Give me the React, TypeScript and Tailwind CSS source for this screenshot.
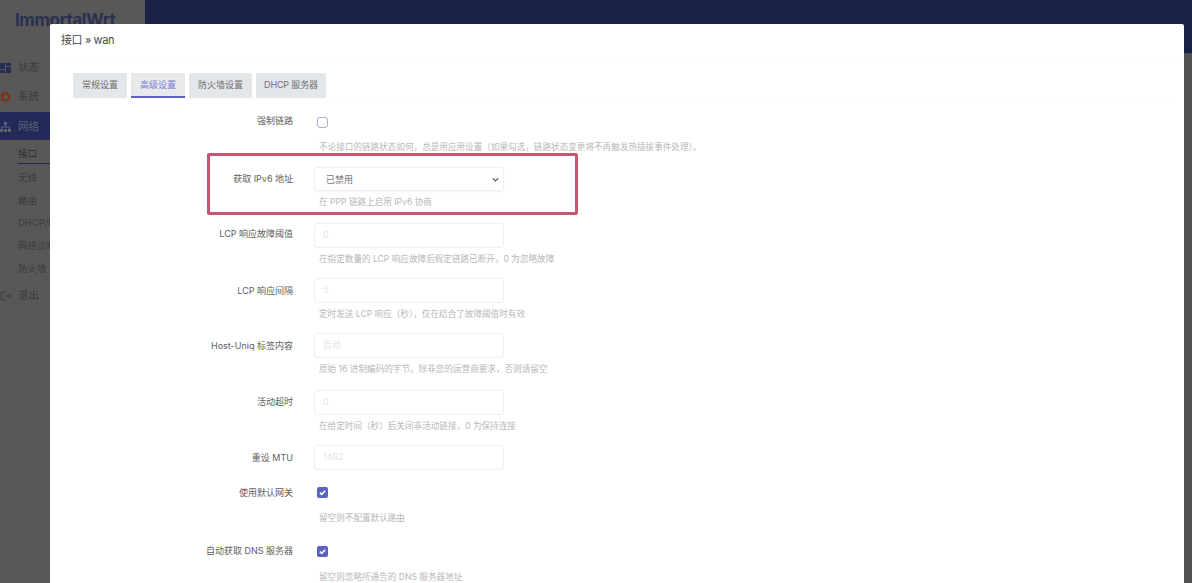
const Row = ({ label, h, top = "pt-[2px]", children }: { label: string; h: string; top?: string; children: React.ReactNode }) => (
  <div className={`flex ${h}`}>
    <div className={`w-[232px] ${top} text-right text-[9px] leading-[18px] text-[#5e5e5e]`}>{label}</div>
    <div className="ml-[21px] flex-1">{children}</div>
  </div>
);

const Input = ({ value }: { value: string }) => (
  <div className="h-[25px] w-[190px] rounded-[3px] border border-[#efefef] bg-white pl-[8px] text-[9px] leading-[22px] text-[#e4e4e4]">
    {value}
  </div>
);

const Hint = ({ children }: { children: React.ReactNode }) => (
  <div className="mt-[2.5px] pl-[5px] text-[8.6px] leading-[16px] whitespace-nowrap text-[#b8b8b8]">{children}</div>
);

const Check = ({ on }: { on?: boolean }) =>
  on ? (
    <div className="ml-[3px] mt-[6px] flex h-[11px] w-[11px] items-center justify-center rounded-[2px] bg-[#5b62c4]">
      <svg viewBox="0 0 12 12" className="h-[9px] w-[9px]" fill="none" stroke="white" strokeWidth="2.2">
        <path d="M2.5 6.3 5 8.6 9.5 3.6" />
      </svg>
    </div>
  ) : (
    <div className="ml-[3px] mt-[5px] h-[11px] w-[11px] rounded-[3px] border border-[#a9add6] bg-white" />
  );

const Tab = ({ active, children }: { active?: boolean; children: React.ReactNode }) =>
  active ? (
    <div className="h-[25px] border-b-2 border-[#5b62c4] bg-[#e7e9eb] px-[9px] leading-[24px] text-[#7a80d2]">{children}</div>
  ) : (
    <div className="h-[25px] rounded-t-[2px] bg-[#e4e7e9] px-[9px] leading-[24px] text-[#6e6e6e]">{children}</div>
  );

const Modal = () => (
  <div className="absolute left-[50px] right-[8px] top-[24px] bottom-0 overflow-hidden rounded-t-[2px] bg-white">
    <div className="h-[35px] border-b border-[#fafafa] pl-[11px] pt-[7px] text-[11px] leading-[18px] tracking-[-0.4px] text-[#4a4a4a]">接口 » wan</div>
    <div className="flex gap-[4px] pl-[23px] pt-[14px] text-[9px]">
      <Tab>常规设置</Tab>
      <Tab active>高级设置</Tab>
      <Tab>防火墙设置</Tab>
      <div className="h-[25px] rounded-t-[2px] bg-[#e4e7e9] px-[8px] leading-[24px] tracking-[-0.15px] text-[#6e6e6e]">DHCP 服务器</div>
    </div>
    <div className="mx-[11px] border-t border-[#fbfbfb] pt-[13px]">
      <Row label="强制链路" h="h-[55px]" top="pt-0">
        <Check />
        <div className="mt-[11px]"><Hint>不论接口的链路状态如何，总是用应用设置（如果勾选，链路状态变更将不再触发热插拔事件处理）。</Hint></div>
      </Row>
      <Row label="获取 IPv6 地址" h="h-[56px]" top="pt-[3px]">
        <div className="flex h-[24px] w-[190px] items-center justify-between rounded-[3px] border border-[#f0f0f0] bg-white pl-[11px] pr-[3px] text-[9px] text-[#777] shadow-[0_1px_2px_rgba(0,0,0,0.04)]">
          <span className="pt-[1px]">已禁用</span>
          <svg viewBox="0 0 12 12" className="h-[9px] w-[9px]" fill="none" stroke="#555" strokeWidth="1.6">
            <path d="M2.5 4.5 6 8 9.5 4.5" />
          </svg>
        </div>
        <Hint>在 PPP 链路上启用 IPv6 协商</Hint>
      </Row>
      <Row label="LCP 响应故障阈值" h="h-[55px]">
        <Input value="0" />
        <Hint>在指定数量的 LCP 响应故障后假定链路已断开，0 为忽略故障</Hint>
      </Row>
      <Row label="LCP 响应间隔" h="h-[55px]" top="pt-[4px]">
        <Input value="5" />
        <div className="mt-[1px]"><Hint>定时发送 LCP 响应（秒），仅在结合了故障阈值时有效</Hint></div>
      </Row>
      <Row label="Host-Uniq 标签内容" h="h-[57px]" top="pt-[4px]">
        <Input value="自动" />
        <div className="mt-[2px]"><Hint>原始 16 进制编码的字节。除非您的运营商要求，否则请留空</Hint></div>
      </Row>
      <Row label="活动超时" h="h-[55px]" top="pt-[3px]">
        <Input value="0" />
        <Hint>在给定时间（秒）后关闭非活动链接，0 为保持连接</Hint>
      </Row>
      <Row label="重设 MTU" h="h-[36px]" top="pt-[4px]">
        <Input value="1492" />
      </Row>
      <Row label="使用默认网关" h="h-[59px]" top="pt-[3px]">
        <Check on />
        <div className="mt-[12px]"><Hint>留空则不配置默认路由</Hint></div>
      </Row>
      <Row label="自动获取 DNS 服务器" h="h-[43px]" top="pt-[2px]">
        <Check on />
        <div className="mt-[12px]"><Hint>留空则忽略所通告的 DNS 服务器地址</Hint></div>
      </Row>
    </div>
  </div>
);

const NavIcon = ({ children }: { children: React.ReactNode }) => (
  <svg viewBox="0 0 12 12" className="h-[12px] w-[12px] shrink-0">{children}</svg>
);

const Sidebar = () => (
  <div className="w-[145px] shrink-0 overflow-hidden bg-[#585858] text-[10.5px] text-[#3a3a3a]">
    <div className="h-[53px] pl-[15px] pt-[9px] text-[17px] font-bold leading-[22px] tracking-[-0.4px] text-[#2a3052]">ImmortalWrt</div>
    <div className="flex h-[29px] items-center gap-[6px]">
      <NavIcon>
        <path d="M0 1h5v6H0zM6 1h5v3H6zM0 8h5v3H0zM6 5h5v6H6z" fill="#232a55" />
      </NavIcon>
      状态
    </div>
    <div className="flex h-[30px] items-center gap-[6px] pb-[1px]">
      <NavIcon>
        <circle cx="5.5" cy="6" r="3.4" fill="none" stroke="#7a3418" strokeWidth="2.2" />
        <circle cx="5.5" cy="6" r="5" fill="none" stroke="#7a3418" strokeWidth="1.4" strokeDasharray="1.6 2.3" />
      </NavIcon>
      系统
    </div>
    <div className="flex h-[28px] items-center gap-[6px] bg-[#232a5a] pt-[1px] text-[#5f6070]">
      <NavIcon>
        <path d="M4 1h3v3H4zM0 8h3v3H0zM4 8h3v3H4zM8 8h3v3H8z" fill="#5f6070" />
        <path d="M5.5 4v2M1.5 8V6h8v2" fill="none" stroke="#5f6070" />
      </NavIcon>
      网络
    </div>
    <div className="pl-[18px] text-[9.5px]">
      <div className="mt-[3px] h-[21px] border-b border-[#232a55] leading-[22px] text-[#2e2e2e]">接口</div>
      <div className="h-[23px] leading-[28px]">无线</div>
      <div className="h-[23px] leading-[28px]">路由</div>
      <div className="h-[23px] leading-[25px]">DHCP/DNS</div>
      <div className="h-[23px] leading-[26px]">网络诊断</div>
      <div className="h-[23px] leading-[26px]">防火墙</div>
    </div>
    <div className="mt-[4px] flex h-[26px] items-center gap-[6px]">
      <NavIcon>
        <path d="M6 2H1v8h5M4.5 6H11M8.5 3.5 11 6 8.5 8.5" fill="none" stroke="#444" strokeWidth="1.4" />
      </NavIcon>
      退出
    </div>
  </div>
);

export default function App() {
  return (
    <div className="relative flex h-[583px] w-[1192px] overflow-hidden font-['Inter','Noto_Sans_CJK_SC',sans-serif]">
      <Sidebar />
      <div className="flex flex-1 flex-col bg-[#505050]">
        <div className="h-[53px] bg-[#1b2145]" />
      </div>
      <Modal />
      {/* red annotation box */}
      <div className="absolute left-[207px] top-[153px] h-[62px] w-[371px] rounded-[2px] border-[3px] border-[#c9566f]" />
    </div>
  );
}
